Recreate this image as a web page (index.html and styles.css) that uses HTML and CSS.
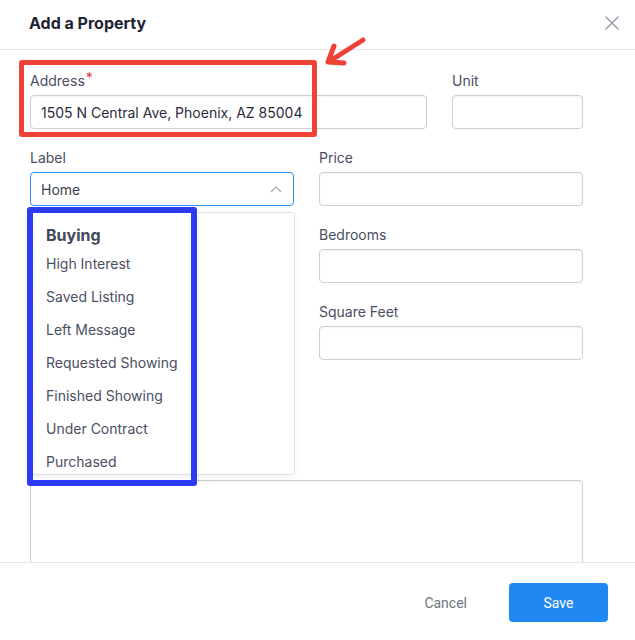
FILE: index.html
```html
<!DOCTYPE html>
<html lang="en">
<head>
    <meta charset="UTF-8">
    <title>Add a Property</title>
    <link rel="stylesheet" href="styles.css">
</head>
<body>
<div class="modal">
    <div class="modal-header">
        <h2>Add a Property</h2>
        <button type="button" class="close">
            <svg width="14" height="14" viewBox="0 0 14 14"><path d="M1 1L13 13M13 1L1 13" stroke="#9b9eab" stroke-width="1.5" stroke-linecap="round"/></svg>
        </button>
    </div>
    <div class="modal-body">
        <div class="row-address">
            <div class="field">
                <label>Address<span class="req">*</span></label>
                <input type="text" value="1505 N Central Ave, Phoenix, AZ 85004">
            </div>
            <div class="field">
                <label>Unit</label>
                <input type="text">
            </div>
        </div>
        <div class="grid">
            <div class="field select-field">
                <label>Label</label>
                <div class="select">
                    <span>Home</span>
                    <svg width="12" height="8" viewBox="0 0 12 8"><path d="M1 7L6 2L11 7" fill="none" stroke="#a3a6b1" stroke-width="1.2"/></svg>
                </div>
                <ul class="dropdown">
                    <li class="group">Buying</li>
                    <li>High Interest</li>
                    <li>Saved Listing</li>
                    <li>Left Message</li>
                    <li>Requested Showing</li>
                    <li>Finished Showing</li>
                    <li>Under Contract</li>
                    <li>Purchased</li>
                </ul>
            </div>
            <div class="field">
                <label>Price</label>
                <input type="text">
            </div>
            <div class="field-spacer"></div>
            <div class="field">
                <label>Bedrooms</label>
                <input type="text">
            </div>
            <div class="field-spacer"></div>
            <div class="field">
                <label>Square Feet</label>
                <input type="text">
            </div>
            <div class="field-spacer"></div>
            <div></div>
            <div class="field full">
                <div class="label-spacer"></div>
                <textarea></textarea>
            </div>
        </div>
    </div>
    <div class="modal-footer">
        <button type="button" class="btn-cancel">Cancel</button>
        <button type="button" class="btn-save">Save</button>
    </div>

    <!-- annotations -->
    <div class="mark mark-red"></div>
    <div class="mark mark-blue"></div>
    <svg class="arrow" width="50" height="36" viewBox="0 0 50 36">
        <path d="M43 3L10 24" stroke="#ef4136" stroke-width="5" stroke-linecap="round"/>
        <path d="M14 9L8 25L24 26" fill="none" stroke="#ef4136" stroke-width="5" stroke-linecap="round" stroke-linejoin="round"/>
    </svg>
</div>
</body>
</html>
```

FILE: styles.css
```css
* {
    box-sizing: border-box;
}
body {
    margin: 0;
    font-family: Inter, "Noto Sans", sans-serif;
    color: #4a4e61;
    background: #fff;
}
.modal {
    position: relative;
    width: 635px;
    height: 640px;
    display: flex;
    flex-direction: column;
    overflow: hidden;
}
.modal-header {
    height: 50px;
    flex: none;
    display: flex;
    align-items: center;
    justify-content: space-between;
    padding: 0 16px 3px 29px;
    border-bottom: 1px solid #e6e7eb;
}
.modal-header h2 {
    margin: 0;
    font-size: 16px;
    font-weight: 700;
    color: #1f2233;
}
.close {
    border: none;
    background: none;
    padding: 0;
    width: 14px;
    height: 14px;
    display: flex;
}
.modal-body {
    flex: 1;
    overflow: hidden;
    padding: 19px 52px 0 30px;
}
.row-address {
    display: grid;
    grid-template-columns: 1fr 131px;
    column-gap: 25px;
    margin-bottom: 17px;
}
.grid {
    display: grid;
    grid-template-columns: 1fr 1fr;
    column-gap: 25px;
    row-gap: 17px;
}
.full {
    grid-column: 1 / 3;
}
.field {
    display: flex;
    flex-direction: column;
}
.field-spacer {
    height: 60px;
}
.label-spacer {
    height: 20px;
    margin-bottom: 6px;
}
.field label {
    height: 22px;
    padding-top: 2px;
    font-size: 14px;
    line-height: 20px;
    margin-bottom: 4px;
    color: #4a4e61;
}
.req {
    position: relative;
    top: -3px;
    color: #e8354a;
    font-size: 14px;
    line-height: 0;
    margin-left: 1px;
}
input, textarea {
    height: 34px;
    border: 1px solid #cbced6;
    border-radius: 4px;
    padding: 0 10px;
    font-family: inherit;
    font-size: 14px;
    color: #2a2d3c;
    box-shadow: inset 0 1px 2px rgba(0, 0, 0, 0.05);
}
textarea {
    height: 120px;
    resize: none;
}
.select-field {
    position: relative;
}
.select {
    height: 34px;
    border: 1px solid #2f8ff0;
    border-radius: 4px;
    display: flex;
    align-items: center;
    justify-content: space-between;
    padding: 0 11px 0 10px;
    font-size: 14px;
    color: #3c3f50;
}
.dropdown {
    position: absolute;
    top: 66px;
    left: 0;
    width: 265px;
    height: 263px;
    overflow: hidden;
    margin: 0;
    padding: 10px 0 0;
    list-style: none;
    background: #fff;
    border: 1px solid #e0e2e7;
    border-radius: 4px;
    box-shadow: 0 2px 6px rgba(0, 0, 0, 0.06);
    z-index: 2;
}
.dropdown li {
    height: 33px;
    line-height: 33px;
    padding-left: 15px;
    font-size: 14px;
    color: #4a4e61;
}
.dropdown li.group {
    height: 24px;
    line-height: 24px;
    font-size: 16px;
    font-weight: 700;
    color: #44485b;
}
.modal-footer {
    height: 78px;
    flex: none;
    border-top: 1px solid #e6e7eb;
    display: flex;
    align-items: center;
    justify-content: flex-end;
    gap: 42px;
    padding: 2px 27px 0 0;
}
.btn-cancel {
    border: none;
    background: none;
    font-family: Roboto, sans-serif;
    font-size: 14px;
    color: #6e7282;
    padding: 0;
}
.btn-save {
    width: 99px;
    height: 39px;
    border: none;
    border-radius: 4px;
    background: #1f88f2;
    color: #fff;
    font-family: Roboto, sans-serif;
    font-size: 14px;
}
.mark {
    position: absolute;
    border-radius: 3px;
    z-index: 5;
}
.mark-red {
    left: 19px;
    top: 60px;
    width: 298px;
    height: 77px;
    border: 5px solid #ef4136;
}
.mark-blue {
    left: 27px;
    top: 207px;
    width: 170px;
    height: 279px;
    border: 6px solid #2b3bf5;
}
.arrow {
    position: absolute;
    left: 320px;
    top: 37px;
    z-index: 5;
}
```
